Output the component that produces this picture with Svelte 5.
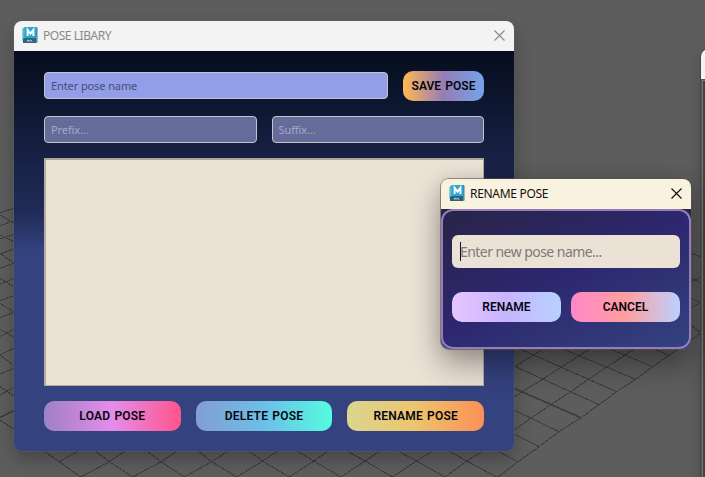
<script>
  const grid = [
    'M0 212.7L14 208.3M0 215L14 223.3M0 225.7L14 220.7M0 235L14 241.7M0 239L14 234.3M0 254L14 249M0 253.3L14 263.3L0 268.3M0 278.3L14 286.7M0 284.3L14 278.3M0 300.7L14 295.7M0 303.3L14 312.3L0 317.7M0 329.3L14 337.3M0 336.7L14 329.3M0 355L14 348.3M0 355L14 365.7M0 374L14 368.3M0 386.7L14 396M0 395L14 387.3M0 420L14 429.3',
    'M44 451L80.7 477L109.3 461.7L125 451M59.3 461.7L78 451M95 451L109.3 461.7L132.7 477L161 461.7L177 451M147 451L161 461.7L184.3 477L211.7 461.7L228 451M198 451L211.7 461.7L236.7 477L262.7 461L278 451M249 451L262.7 461L289 477L314 461L328 451M297 451L314 461L340.7 477L365 461L380 451M347 451L365 461L392.3 477L416.7 461L432 451M398 451L416.7 461L445 477L466.7 461L483 451M449 451L466.7 461L496.7 477M498 451L518 461.7',
    'M498 477L518 461.7L539 446.7L559 431.7L581 417.7L599 404.7L616.7 391.7L635.7 379.3L652.7 366.7L678 349',
    'M610 349L652.7 366.7M563 349L635.7 379.3M520 349L616.7 391.7M514 366L599 404.7M514 410L559 431.7M514 434L539 446.7M652 348L670 356',
    'M514 397L525 390L542.7 379.3L561.7 366.7L590 349M514 430L531 418.3L550.7 404.7L570.7 391.7L588.3 379.3L607.3 366.7L634 349M514 367L543 349',
    'M691 253L701 257M691 282L701 277M691 278L701 283M691 298L701 303M691 308L701 302M691 325L701 333L691 340'
  ].join('');
</script>

{#snippet logo()}
  <svg class="logo" width="16" height="16" viewBox="0 0 16 16" aria-hidden="true">
    <path d="M0 2L3 0V12L0 14Z" fill="#8ccbdc" />
    <path d="M1 1L4 0V12L1 14Z" fill="#5fb7ce" />
    <path d="M2.5 0H15V11H2.5Z" fill="#30a5cf" />
    <path d="M14.5 0L15.5 1V15.5H14.5Z" fill="#2688a7" />
    <path d="M1 12L2.5 11H14.5V16H1Z" fill="#2b637b" />
    <path d="M5.6 9V2.8L8.5 6.6L11.4 2.8V9" fill="none" stroke="#fff" stroke-width="1.9" />
    <path d="M5 14.6L6 12.8L7 14.6M8 12.8V14.6M9 12.8L10 14.6" fill="none" stroke="#d7e9ed" stroke-width=".8" />
  </svg>
{/snippet}

{#snippet cross()}
  <svg width="11" height="11" viewBox="0 0 11 11" aria-hidden="true"><path d="M.5.5L10.5 10.5M10.5.5L.5 10.5" fill="none" stroke="currentColor" stroke-width="1.15" /></svg>
{/snippet}

<main class="desktop">
  <svg class="grid" width="705" height="477" aria-hidden="true">
    <path d={grid} />
    <path class="axis" d="M514 388.3L581 417.7M0 417.3L14 410.7" />
  </svg>
  <div class="other"><i></i><b></b></div>

  <section class="window library">
    <header>{@render logo()}<span class="title">POSE LIBARY</span><button class="close" aria-label="Close">{@render cross()}</button></header>
    <div class="content">
      <div class="row name-row"><input class="name" placeholder="Enter pose name" /><button class="action save">SAVE POSE</button></div>
      <div class="row affixes"><input placeholder="Prefix..." /><input placeholder="Suffix..." /></div>
      <div class="list"></div>
      <div class="row actions"><button class="action load">LOAD POSE</button><button class="action delete">DELETE POSE</button><button class="action rename">RENAME POSE</button></div>
    </div>
  </section>

  <section class="window dialog">
    <header>{@render logo()}<span class="title">RENAME POSE</span><button class="close" aria-label="Close">{@render cross()}</button></header>
    <div class="dialog-back"><div class="dialog-content">
      <div class="field"><i class="caret"></i><input placeholder="Enter new pose name..." /></div>
      <div class="row dialog-actions"><button class="action confirm">RENAME</button><button class="action cancel">CANCEL</button></div>
    </div></div>
  </section>
</main>

<style>
  :global(body) { margin: 0; overflow: hidden; }
  * { box-sizing: border-box; }
  .desktop { position: relative; width: 705px; height: 477px; overflow: hidden; background: #5d5d5d; font-family: "Noto Sans", sans-serif; }
  .grid { position: absolute; inset: 0; fill: none; stroke: #3e3e3e; stroke-width: 1; shape-rendering: crispEdges; }
  .grid .axis { stroke-width: 1.8; }
  .window { position: absolute; display: flex; flex-direction: column; overflow: hidden; border-radius: 8px; }
  .library { left: 14px; top: 21px; width: 500px; height: 430px; box-shadow: 0 0 0 1px #60606080, 0 8px 18px #0004; }
  .dialog { left: 441px; top: 179px; width: 250px; height: 170px; box-shadow: 0 0 0 1px #57535499, 0 16px 32px #0005, 0 2px 20px #0002; }
  header { height: 30px; flex: none; display: flex; align-items: center; padding: 0 9px 0 8px; background: #f3f3f3; color: #898989; }
  .dialog header { background: #f9f2df; color: #111; }
  .logo { margin-top: -2px; }
  .title { margin-left: 5px; flex: 1; font: 12px/20px "Noto Sans", sans-serif; letter-spacing: -.45px; }
  .dialog .title { letter-spacing: -.3px; }
  .close { display: flex; padding: 0; margin-top: -2px; border: 0; background: none; color: inherit; }
  .content { flex: 1; padding: 20px 30px; background: linear-gradient(#050d1d 0%, #202a57 40%, #34427f 50%, #34427f 100%); }
  .row { display: flex; }
  .name-row { gap: 15px; align-items: flex-start; height: 30px; }
  input { min-width: 0; width: 0; flex: 1; height: 27px; padding: 0 6px; border: 1px solid #c5c3c4; border-radius: 4px; background: #656c99; font: 11px/20px "Noto Sans", sans-serif; letter-spacing: -.1px; outline: none; }
  input::placeholder { color: #a4aac8; opacity: 1; }
  .name { margin-top: 1px; background: #929ee7; }
  .name::placeholder { color: #474d7f; }
  .affixes { gap: 15px; margin-top: 15px; }
  .list { height: 228px; margin-top: 15px; border: solid; border-width: 2px 1px 1px 2px; border-color: #aaa397 #b5aca0 #b5aca0 #b5aca0; background: #ebe1d5; }
  .actions { gap: 15px; margin-top: 15px; }
  .action { height: 30px; flex: 1; padding: 0; border: 0; border-radius: 10px; color: #050510; font: 600 12px/30px Roboto, sans-serif; letter-spacing: .2px; word-spacing: 1px; }
  .save { flex: none; width: 81px; background: linear-gradient(90deg, #ffb852, #957db5 50%, #75a3eb); letter-spacing: .05px; }
  .load { background: linear-gradient(90deg, #9e80c3, #e48dea 50%, #ff548c); }
  .delete { background: linear-gradient(90deg, #829ed4, #6dbfe7 50%, #55fbe0); }
  .rename { background: linear-gradient(90deg, #dad68e, #edc46d 50%, #fb9056); }
  .other { position: absolute; left: 701px; top: 49px; width: 14px; height: 438px; border-radius: 8px 0 0; overflow: hidden; background: #555; box-shadow: 0 0 0 1px #484848, 0 7px 15px #0003; }
  .other i { display: block; height: 30px; background: #f3f3f3; }
  .other b { display: block; height: 408px; margin: 1px 0 0 1px; border: solid #777; border-width: 1px 0 0 1px; background: #424242; }
  .dialog-back { flex: 1; background: linear-gradient(#292549, #34427f); }
  .dialog-content { height: 140px; padding: 24px 9px; border: 2px solid #967cb8; border-radius: 12px; background: linear-gradient(155deg, #292447 0%, #2d276f 48%, #34427f 100%); }
  .field { position: relative; display: flex; }
  .field input { height: 33px; padding: 0 8px; border: 0; border-radius: 6px; background: #ebe1d5; font-size: 14px; letter-spacing: -.55px; }
  .field input::placeholder { color: #817a76; }
  .caret { position: absolute; left: 8px; top: 7px; width: 1px; height: 19px; background: #101025; }
  .dialog-actions { gap: 10px; margin-top: 24px; }
  .dialog-actions .action { letter-spacing: 0; }
  .confirm { background: linear-gradient(90deg, #e7c5ff, #c7b5ff 50%, #b9d1ff); }
  .cancel { background: linear-gradient(90deg, #ff87c8, #ff9f9f 50%, #bbd1ff); }
</style>
